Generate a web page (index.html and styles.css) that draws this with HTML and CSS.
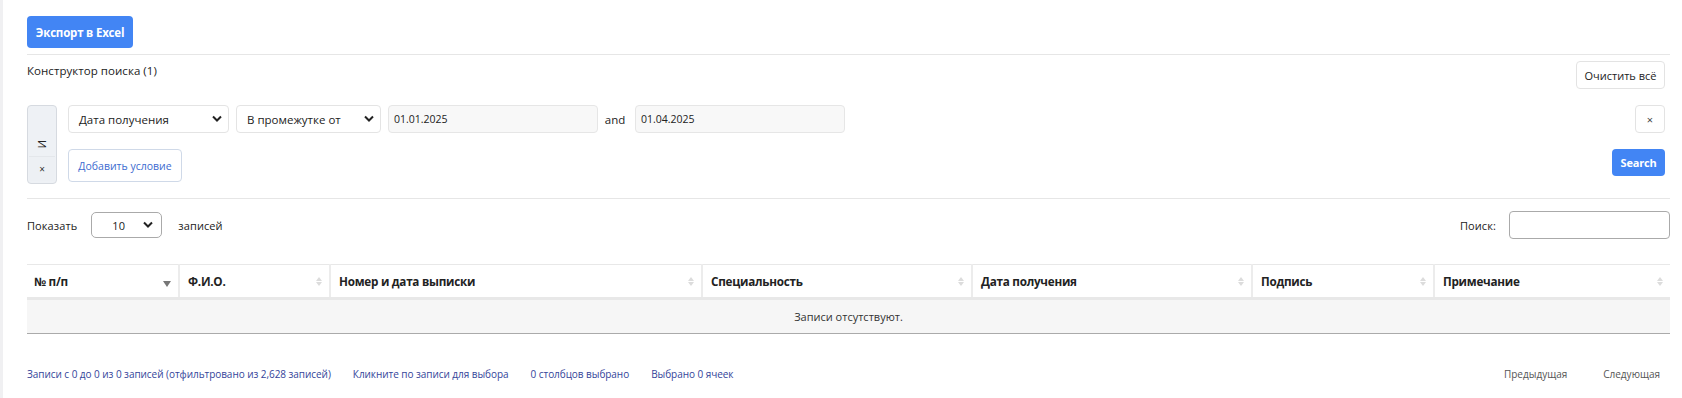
FILE: index.html
```html
<!DOCTYPE html>
<html lang="ru">
<head>
<meta charset="utf-8">
<title>Журнал</title>
<link rel="stylesheet" href="styles.css">
</head>
<body>
<div class="page">
  <div class="toolbar">
    <button class="btn-primary btn-export">Экспорт в Excel</button>
  </div>
  <hr class="sep">
  <div class="builder">
    <div class="builder-head">
      <div class="builder-title">Конструктор поиска (1)</div>
      <button class="btn-light btn-clear">Очистить всё</button>
    </div>
    <div class="builder-body">
      <div class="logic">
        <div class="logic-word"><span>И</span></div>
        <div class="logic-x">×</div>
      </div>
      <div class="criteria">
        <div class="criterion">
          <div class="select sel-field"><span>Дата получения</span><svg viewBox="0 0 10 8" class="chev"><path d="M1 1.5 L5 5.5 L9 1.5" fill="none" stroke="#222" stroke-width="2"/></svg></div>
          <div class="select sel-cond"><span>В промежутке от</span><svg viewBox="0 0 10 8" class="chev"><path d="M1 1.5 L5 5.5 L9 1.5" fill="none" stroke="#222" stroke-width="2"/></svg></div>
          <div class="value">01.01.2025</div>
          <div class="and">and</div>
          <div class="value">01.04.2025</div>
        </div>
        <button class="btn-add">Добавить условие</button>
      </div>
      <div class="side">
        <button class="btn-light btn-del">×</button>
        <button class="btn-primary btn-search">Search</button>
      </div>
    </div>
  </div>
  <hr class="sep sep2">
  <div class="controls">
    <div class="length">
      <span>Показать</span>
      <div class="select sel-len"><span>10</span><svg viewBox="0 0 10 8" class="chev"><path d="M1 1.5 L5 5.5 L9 1.5" fill="none" stroke="#222" stroke-width="2"/></svg></div>
      <span>записей</span>
    </div>
    <div class="filter">
      <span>Поиск:</span>
      <div class="search-input"></div>
    </div>
  </div>
  <table class="grid">
    <colgroup>
      <col style="width:152px"><col style="width:151px"><col style="width:372px"><col style="width:270px"><col style="width:280px"><col style="width:182px"><col>
    </colgroup>
    <thead>
      <tr>
        <th><div class="th"><span>№ п/п</span><span class="sort sorted"><i class="down"></i></span></div></th>
        <th><div class="th"><span>Ф.И.О.</span><span class="sort"><i class="up"></i><i class="down"></i></span></div></th>
        <th><div class="th"><span>Номер и дата выписки</span><span class="sort"><i class="up"></i><i class="down"></i></span></div></th>
        <th><div class="th"><span>Специальность</span><span class="sort"><i class="up"></i><i class="down"></i></span></div></th>
        <th><div class="th"><span>Дата получения</span><span class="sort"><i class="up"></i><i class="down"></i></span></div></th>
        <th><div class="th"><span>Подпись</span><span class="sort"><i class="up"></i><i class="down"></i></span></div></th>
        <th><div class="th"><span>Примечание</span><span class="sort"><i class="up"></i><i class="down"></i></span></div></th>
      </tr>
    </thead>
    <tbody>
      <tr><td colspan="7" class="empty">Записи отсутствуют.</td></tr>
    </tbody>
  </table>
  <div class="footer">
    <div class="info">
      <span>Записи с 0 до 0 из 0 записей (отфильтровано из 2,628 записей)</span>
      <span>Кликните по записи для выбора</span>
      <span>0 столбцов выбрано</span>
      <span>Выбрано 0 ячеек</span>
    </div>
    <div class="paging">
      <span>Предыдущая</span>
      <span>Следующая</span>
    </div>
  </div>
</div>
</body>
</html>
```
FILE: styles.css
```css
* { box-sizing: border-box; }
html, body { margin: 0; padding: 0; background: #fff; }
body {
  font-family: "Open Sans", "Noto Sans", sans-serif;
  font-size: 12px;
  color: #222;
}
.page {
  border-left: 3px solid #f0f0f2;
  min-height: 398px;
  padding: 16px 12px 0 24px;
}
button { font-family: inherit; cursor: pointer; }
.btn-primary {
  background: #4285f4;
  color: #fff;
  border: none;
  border-radius: 4px;
  font-weight: 700;
}
.btn-export { width: 106px; height: 32px; font-size: 11.5px; padding: 0; letter-spacing: -0.2px; }
.sep { border: none; border-top: 1px solid #e6e6e6; margin: 6px 0 0 0; height: 0; }
.builder { padding-right: 5px; }
.builder-head { display: flex; justify-content: space-between; align-items: flex-start; }
.builder-title { font-size: 11.5px; padding-top: 8px; line-height: 16px; letter-spacing: 0.05px; }
.btn-light {
  background: #fff;
  border: 1px solid #e3e3e3;
  border-radius: 4px;
  color: #222;
}
.btn-clear { margin-top: 6px; width: 89px; height: 28px; font-size: 11px; padding: 0; }
.builder-body { display: flex; margin-top: 16px; align-items: flex-start; }
.logic {
  width: 30px; height: 79px;
  background: #eef1f5;
  border: 1px solid #d6dae0;
  border-radius: 4px;
  display: flex; flex-direction: column;
}
.logic-word { flex: 1; display: flex; align-items: center; justify-content: center; padding-top: 27px; }
.logic-word span { writing-mode: vertical-rl; font-size: 11px; color: #222; }
.logic-x {
  height: 25px; display: flex; align-items: center; justify-content: center;
  font-size: 10px; color: #333; border-top: 1px solid #e4e7eb; margin: 0 1px 2px 1px;
  background: #edf0f4;
}
.criteria { margin-left: 11px; flex: 1; display: flex; flex-direction: column; gap: 16px; }
.criterion { display: flex; align-items: center; height: 28px; }
.select {
  height: 28px;
  border: 1px solid #e4e4e4;
  border-radius: 4px;
  background: #fff;
  display: flex; align-items: center; justify-content: space-between;
  padding: 0 6px 0 10px;
  font-size: 11.5px;
}
.chev { width: 10px; height: 8px; }
.sel-field { width: 161px; }
.sel-cond { width: 145px; margin-left: 7px; }
.value {
  height: 28px;
  width: 210px;
  margin-left: 7px;
  background: #f8f8f8;
  border: 1px solid #e6e6e6;
  border-radius: 4px;
  display: flex; align-items: center;
  padding-left: 5px;
  font-size: 10.5px;
}
.and { width: 37px; text-align: center; font-size: 11.5px; margin-left: 0; padding-right: 3px; }
.and + .value { margin-left: 0; }
.btn-add {
  align-self: flex-start;
  width: 114px; height: 33px;
  background: #fff;
  border: 1px solid #cfd9e8;
  border-radius: 4px;
  color: #3c6bd0;
  font-size: 10.5px;
  padding: 0;
}
.side { display: flex; flex-direction: column; align-items: flex-end; gap: 16px; }
.btn-del { width: 30px; height: 28px; font-size: 11px; padding: 0; color: #444; }
.btn-search { width: 53px; height: 27px; font-size: 11px; padding: 0; letter-spacing: -0.2px; }
.sep2 { margin-top: 14px; }
.controls { display: flex; justify-content: space-between; align-items: center; margin-top: 12px; height: 28px; }
.length { display: flex; align-items: center; font-size: 11px; letter-spacing: 0.1px; }
.sel-len {
  width: 71px; height: 26px; margin: 0 16px 0 14px;
  border: 1px solid #aaa; border-radius: 5px;
  padding: 0 8px 0 20px; font-size: 11px;
}
.filter { display: flex; align-items: center; font-size: 11px; letter-spacing: 0.1px; }
.search-input { width: 161px; height: 28px; border: 1px solid #aaa; border-radius: 4px; margin-left: 13px; }
.grid {
  width: 100%;
  margin-top: 25px;
  border-collapse: collapse;
  table-layout: fixed;
}
.grid th {
  height: 34px;
  padding: 0;
  border-top: 1px solid #e8e8e8;
  border-bottom: 3px solid #e8e8e8;
  border-left: 2px solid #ececec;
  text-align: left;
  font-size: 11.7px;
  font-weight: 700;
}
.grid th:first-child { border-left: none; }
.th { display: flex; justify-content: space-between; align-items: center; padding: 0 7px 0 8px; letter-spacing: -0.25px; }
.grid th:first-child .th { padding-left: 7px; }
.sort { display: flex; flex-direction: column; gap: 1px; }
.sort i { display: block; width: 0; height: 0; border-left: 3.5px solid transparent; border-right: 3.5px solid transparent; }
.sort .up { border-bottom: 4px solid #dcdcdc; }
.sort .down { border-top: 4px solid #dcdcdc; }
.sort.sorted { margin-top: 5px; }
.sort.sorted .down { border-top: 6px solid #777; border-left-width: 4.5px; border-right-width: 4.5px; }
.empty {
  height: 35px;
  background: #f6f6f6;
  text-align: center;
  font-size: 11px;
  color: #333;
  border-bottom: 1px solid #aaa;
  padding: 0;
}
.footer { display: flex; justify-content: space-between; align-items: center; margin-top: 33px; padding-right: 10px; }
.info { display: flex; gap: 22px; color: #34449a; font-size: 10px; letter-spacing: -0.05px; }
.paging { display: flex; gap: 36px; color: #555; font-size: 10px; }
```
